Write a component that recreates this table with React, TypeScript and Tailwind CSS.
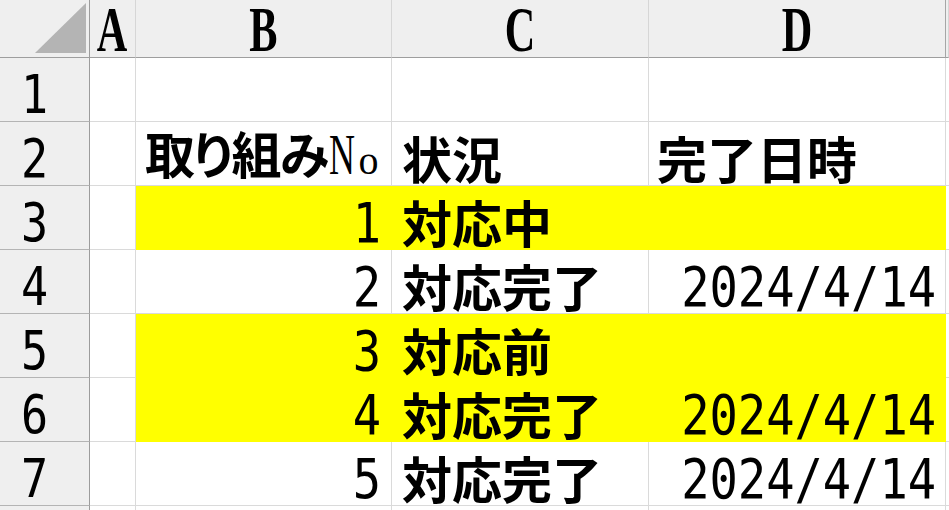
import React from "react";

type Row = {
  fill?: boolean;
  no?: string;
  noBold?: boolean;
  status?: string;
  done?: string;
  doneBold?: boolean;
};

const rows: Row[] = [
  {},
  { no: "取り組みNo", noBold: true, status: "状況", done: "完了日時", doneBold: true },
  { fill: true, no: "1", status: "対応中" },
  { no: "2", status: "対応完了", done: "2024/4/14" },
  { fill: true, no: "3", status: "対応前" },
  { fill: true, no: "4", status: "対応完了", done: "2024/4/14" },
  { no: "5", status: "対応完了", done: "2024/4/14" },
];

const grid = "grid grid-cols-[90px_46px_256px_257px_297px_1fr]";
const jp = "font-['Noto_Sans_CJK_JP',sans-serif] font-bold [font-feature-settings:'palt']";
const num = "font-['DejaVu_Sans_Mono',monospace]";

function ColHead({ label, dark }: { label?: string; dark?: boolean }) {
  return (
    <div
      className={`flex items-start justify-center border-b border-r border-b-[#9e9e9e] bg-[#efefef] ${
        dark ? "border-r-[#a6a6a6]" : "border-r-[#d6d6d6]"
      }`}
    >
      {label && (
        <span className="mt-[3px] inline-block scale-x-[0.66] font-['Liberation_Serif',serif] text-[64px] font-bold leading-[0.85] text-black">
          {label}
        </span>
      )}
    </div>
  );
}

function RowHead({ n }: { n: number }) {
  return (
    <div className="flex items-end justify-start border-r border-b border-r-[#9c9c9c] border-b-[#b4b4b4] bg-[#efefef] pb-[4px] pl-[21px]">
      <span className={`inline-block origin-left scale-x-[0.85] ${num} text-[53px] leading-[0.85] text-black`}>{n}</span>
    </div>
  );
}

function Text({ value }: { value: string }) {
  const isNum = /^[0-9/]+$/.test(value);
  if (isNum) {
    return (
      <span className={`inline-block origin-right scale-x-[0.855] ${num} text-[55px] leading-[0.85] text-black`}>
        {value}
      </span>
    );
  }
  if (value.endsWith("No")) {
    return (
      <span className={`${jp} text-[50px] leading-[1.1] tracking-[-1.5px] text-black`}>
        {value.slice(0, -2)}
        <span className="font-['Liberation_Serif',serif] font-normal tracking-normal">
          <span className="ml-[2px] inline-block w-[29px] origin-left scale-x-[0.62] text-[58px] leading-none">N</span>
          <span className="text-[40px] leading-none">o</span>
        </span>
      </span>
    );
  }
  return <span className={`${jp} text-[50px] leading-[1.1] text-black`}>{value}</span>;
}

export default function App() {
  return (
    <div className="h-[510px] w-[949px] overflow-hidden bg-white">
      <div className={`${grid} h-[58px]`}>
        <div className="flex items-start justify-end border-r border-b border-r-[#9c9c9c] border-b-[#9e9e9e] bg-[#efefef] pr-[3px] pt-[3px]">
          <svg width="51" height="50" viewBox="0 0 51 50">
            <polygon points="0,50 51,50 51,0" fill="#b4b4b4" />
          </svg>
        </div>
        <ColHead label="A" />
        <ColHead label="B" />
        <ColHead label="C" />
        <ColHead label="D" dark />
        <ColHead />
      </div>

      {rows.map((r, i) => {
        const cell = r.fill
          ? "bg-[#ffff00] border-r border-b border-[#ffff00]"
          : "bg-white border-r border-b border-[#dadada]";
        return (
          <div key={i} className={`${grid} h-[64px]`}>
            <RowHead n={i + 1} />
            <div className="border-r border-b border-[#dadada] bg-white" />
            <div className={`${cell} flex items-end ${r.noBold ? "justify-start pl-[9px] pb-0" : "justify-end pr-[10px] pb-[2px]"}`}>
              {r.no && <Text value={r.no} />}
            </div>
            <div className={`${cell} flex items-end pb-0 pl-[10px]`}>
              {r.status && <Text value={r.status} />}
            </div>
            <div className={`${cell} flex items-end ${r.doneBold ? "justify-start pl-[8px] pb-0" : "justify-end pr-[9px] pb-[2px]"}`}>
              {r.done && <Text value={r.done} />}
            </div>
            <div className="border-b border-[#dadada] bg-white" />
          </div>
        );
      })}

      <div className={`${grid} h-[10px]`}>
        <div className="border-r border-r-[#9c9c9c] bg-[#efefef]" />
        <div className="border-r border-[#dadada]" />
        <div className="border-r border-[#dadada]" />
        <div className="border-r border-[#dadada]" />
        <div className="border-r border-[#dadada]" />
        <div />
      </div>
    </div>
  );
}
